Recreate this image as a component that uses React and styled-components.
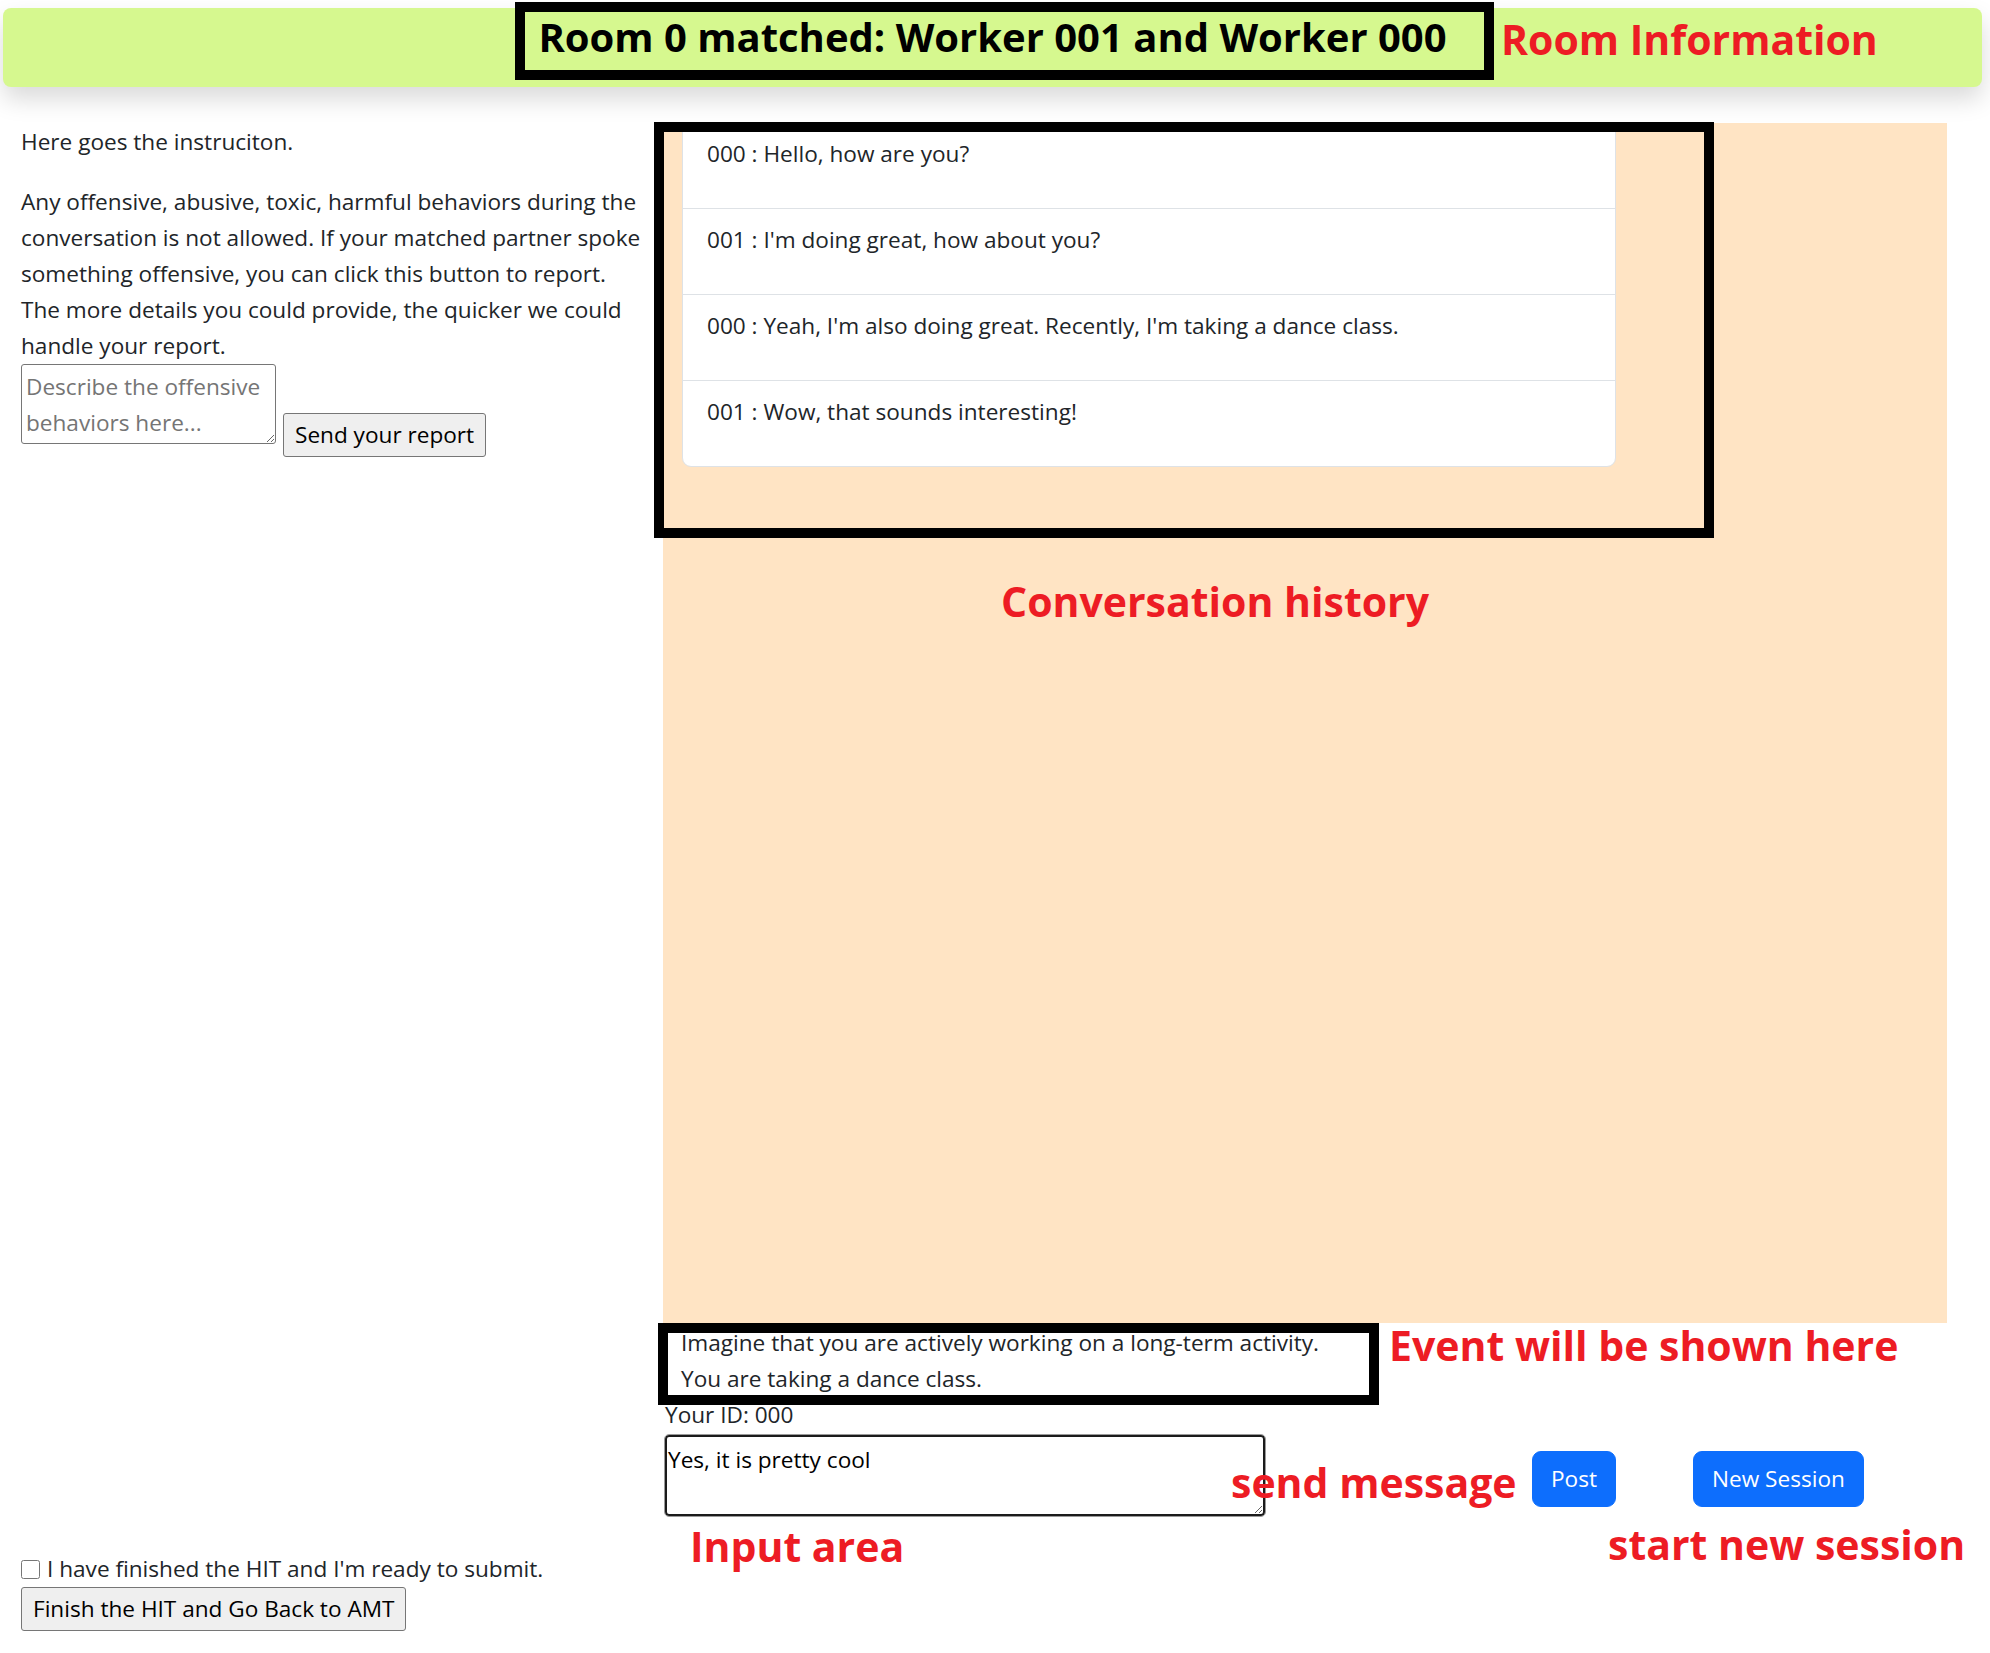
import React from "react";
import styled, { createGlobalStyle } from "styled-components";

const GlobalStyle = createGlobalStyle`
  * {
    box-sizing: border-box;
  }
  body {
    margin: 0;
    background: #fff;
    color: #212529;
    font-family: "Open Sans", "Noto Sans", sans-serif;
    font-size: 22.6px;
    line-height: 36px;
  }
`;

const Page = styled.div`
  position: relative;
  width: 1990px;
  min-height: 1653px;
  padding-top: 8px;
`;

const Header = styled.header`
  height: 79px;
  margin: 0 8px 0 3px;
  padding-top: 5px;
  background: #d6f88f;
  border-radius: 8px;
  box-shadow: 0 12px 24px rgba(0, 0, 0, 0.15);
  text-align: center;
`;

const Title = styled.h2`
  margin: 0;
  font-size: 40px;
  line-height: 48px;
  font-weight: 700;
  color: #000;
`;

const Main = styled.main`
  display: grid;
  grid-template-columns: 663px 1284px;
  min-height: 1508px;
  margin-top: 36px;
`;

const Sidebar = styled.aside`
  display: flex;
  flex-direction: column;
  padding: 1px 18px 0 21px;
`;

const Text = styled.p`
  margin: 0 0 ${(props) => (props.$last ? "0" : "24px")};
`;

const ReportRow = styled.div`
  display: flex;
  align-items: flex-start;
  gap: 7px;
`;

const ReportBox = styled.textarea`
  width: 255px;
  height: 80px;
  margin: 0;
  padding: 4px 4px 2px;
  font: inherit;
  color: #212529;
  border: 1px solid #767676;
  border-radius: 3px;

  &::placeholder {
    color: #757575;
  }
`;

const PlainButton = styled.button`
  margin: ${(props) => props.$offset || 0}px 0 0;
  padding: 3px 11px;
  font: inherit;
  color: #000;
  background: #efefef;
  border: 1px solid #767676;
  border-radius: 3px;
`;

const Finish = styled.div`
  margin-top: auto;
  display: flex;
  flex-direction: column;
  align-items: flex-start;
`;

const CheckLine = styled.label`
  display: flex;
  align-items: center;
  gap: 7px;
`;

const Check = styled.input`
  width: 19px;
  height: 19px;
  margin: 0;
`;

const ChatColumn = styled.section`
  display: flex;
  flex-direction: column;
`;

const History = styled.div`
  height: 1200px;
  padding-left: 19px;
  background: bisque;
`;

const MessageList = styled.ul`
  width: 934px;
  margin: 0;
  padding: 0;
  list-style: none;
  background: #fff;
  border: 1.5px solid #dee2e6;
  border-radius: 9px;
`;

const Message = styled.li`
  padding: 13px 24px 36px;
  border-top: 1.5px solid #dee2e6;

  &:first-child {
    padding-top: 12px;
    border-top: none;
  }
`;

const Event = styled.div`
  padding: 2px 18px 0;
`;

const YourId = styled.div`
  padding-left: 2px;
`;

const InputRow = styled.div`
  display: flex;
  align-items: flex-start;
  padding: 2px 0 0 2px;
`;

const MessageBox = styled.textarea`
  width: 600px;
  height: 81px;
  margin: 0 267px 0 0;
  padding: 5px 1px;
  font: inherit;
  color: #000;
  border: 2px solid #1b1b1b;
  border-radius: 4px;
  outline: 1px solid #9a9a9a;
`;

const PrimaryButton = styled.button`
  margin: 16px ${(props) => props.$gap || 0}px 0 0;
  padding: 9px 18px;
  font: inherit;
  color: #fff;
  background: #0d6efd;
  border: 1.5px solid #0d6efd;
  border-radius: 9px;
`;

const Outline = styled.div`
  position: absolute;
  left: ${(props) => props.$x}px;
  top: ${(props) => props.$y}px;
  width: ${(props) => props.$w}px;
  height: ${(props) => props.$h}px;
  border: 10px solid #000;
  pointer-events: none;
`;

const Note = styled.span`
  position: absolute;
  left: ${(props) => props.$x}px;
  top: ${(props) => props.$y}px;
  font-family: "Open Sans", "Noto Sans", sans-serif;
  font-weight: 700;
  font-size: 41px;
  line-height: 41px;
  color: #ed1c24;
  white-space: nowrap;
  pointer-events: none;
`;

const messages = [
  "000 : Hello, how are you?",
  "001 : I'm doing great, how about you?",
  "000 : Yeah, I'm also doing great. Recently, I'm taking a dance class.",
  "001 : Wow, that sounds interesting!",
];

const App = () => {
  return (
    <Page>
      <GlobalStyle />
      <Header>
        <Title>Room 0 matched: Worker 001 and Worker 000</Title>
      </Header>

      <Main>
        <Sidebar>
          <Text>Here goes the instruciton.</Text>
          <Text $last>
            Any offensive, abusive, toxic, harmful behaviors during the
            conversation is not allowed. If your matched partner spoke
            something offensive, you can click this button to report. The
            more details you could provide, the quicker we could handle your
            report.
          </Text>
          <ReportRow>
            <ReportBox placeholder="Describe the offensive behaviors here..." />
            <PlainButton $offset={49}>Send your report</PlainButton>
          </ReportRow>

          <Finish>
            <CheckLine>
              <Check type="checkbox" />
              I have finished the HIT and I'm ready to submit.
            </CheckLine>
            <PlainButton>Finish the HIT and Go Back to AMT</PlainButton>
          </Finish>
        </Sidebar>

        <ChatColumn>
          <History>
            <MessageList>
              {messages.map((m) => (
                <Message key={m}>{m}</Message>
              ))}
            </MessageList>
          </History>
          <Event>
            Imagine that you are actively working on a long-term activity.
            <br />
            You are taking a dance class.
          </Event>
          <YourId>Your ID: 000</YourId>
          <InputRow>
            <MessageBox defaultValue="Yes, it is pretty cool" />
            <PrimaryButton $gap={77}>Post</PrimaryButton>
            <PrimaryButton>New Session</PrimaryButton>
          </InputRow>
        </ChatColumn>
      </Main>

      <Outline $x={515} $y={2} $w={979} $h={78} />
      <Outline $x={654} $y={122} $w={1060} $h={416} />
      <Outline $x={658} $y={1323} $w={721} $h={82} />

      <Note $x={1501} $y={18.6}>Room Information</Note>
      <Note $x={1001} $y={580.6}>Conversation history</Note>
      <Note $x={1389} $y={1324.6}>Event will be shown here</Note>
      <Note $x={1231} $y={1461.6}>send message</Note>
      <Note $x={690} $y={1526.3}>Input area</Note>
      <Note $x={1608} $y={1523.6}>start new session</Note>
    </Page>
  );
};

export default App;
